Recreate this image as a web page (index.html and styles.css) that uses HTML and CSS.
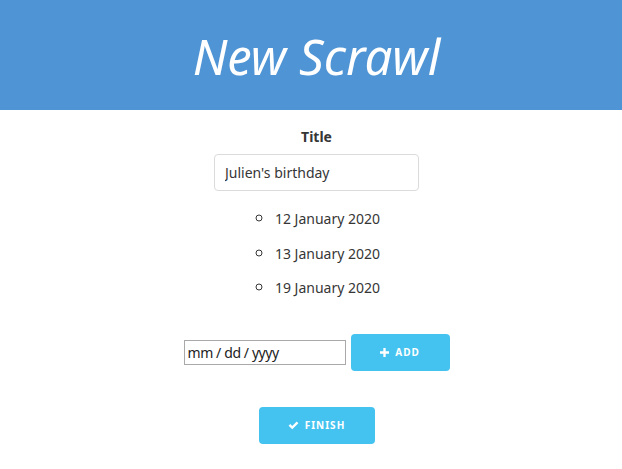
FILE: index.html
```html
<!DOCTYPE html>
<html>
<head>
<meta charset="utf-8">
<link rel="stylesheet" href="styles.css">
</head>
<body>
<header class="hero">
  <h1 class="hero-title">New Scrawl</h1>
</header>
<main class="content">
  <label class="field-label" for="title">Title</label>
  <input id="title" class="text-input" type="text" value="Julien's birthday">
  <ul class="dates">
    <li>12 January 2020</li>
    <li>13 January 2020</li>
    <li>19 January 2020</li>
  </ul>
  <div class="add-row">
    <input class="date-input" type="text" placeholder="mm / dd / yyyy" aria-label="Date">
    <button class="btn btn-add">
      <svg class="icon" viewBox="0 0 10 10" width="9" height="9"><path d="M3.7 0h2.6v3.7H10v2.6H6.3V10H3.7V6.3H0V3.7h3.7z" fill="#fff"/></svg>
      ADD
    </button>
  </div>
  <button class="btn btn-finish">
    <svg class="icon" viewBox="0 0 12 10" width="11" height="9"><path d="M0.6 5.2l1.8-1.8 2.2 2.2L9.6 0.6l1.8 1.8-6.8 6.8z" fill="#fff"/></svg>
    FINISH
  </button>
</main>
</body>
</html>
```
FILE: styles.css
```css
html, body {
  margin: 0;
  padding: 0;
  background: #fff;
}
body {
  font-family: "Noto Sans", "Open Sans", sans-serif;
  color: #363636;
}
.hero {
  background: #4f94d4;
  height: 110px;
  display: flex;
  align-items: center;
  justify-content: center;
  padding-left: 11px;
  box-sizing: border-box;
}
.hero-title {
  margin: 0;
  color: #fff;
  font-weight: 400;
  font-style: italic;
  font-size: 49px;
  line-height: 1;
  position: relative;
  top: 1px;
}
.content {
  display: flex;
  flex-direction: column;
  align-items: center;
  padding-left: 11px;
  padding-top: 18px;
}
.field-label {
  font-weight: 700;
  font-size: 14px;
  line-height: 18px;
  color: #363636;
}
.text-input {
  margin-top: 8px;
  width: 205px;
  height: 37px;
  box-sizing: border-box;
  border: 1px solid #dbdbdb;
  border-radius: 4px;
  padding: 0 10px;
  font-family: inherit;
  font-size: 14px;
  color: #363636;
  outline: none;
}
.dates {
  margin: 17px 0 0;
  padding: 0 0 0 22px;
  list-style: circle;
  font-size: 14px;
}
.dates li {
  height: 20px;
  line-height: 20px;
  margin-bottom: 14.5px;
}
.dates li::marker {
  font-size: 17px;
}
.add-row {
  display: flex;
  align-items: center;
  gap: 5px;
  margin-top: 22px;
}
.date-input {
  width: 162px;
  height: 25px;
  box-sizing: border-box;
  border: 1px solid #a9a9a9;
  border-radius: 0;
  padding: 0 3px;
  font-family: inherit;
  font-size: 14px;
  letter-spacing: -0.4px;
  color: #222;
  outline: none;
}
.date-input::placeholder {
  color: #222;
  opacity: 1;
}
.btn {
  display: inline-flex;
  align-items: center;
  justify-content: center;
  gap: 6px;
  background: #44c3f0;
  color: #fff;
  border: none;
  border-radius: 4px;
  font-family: inherit;
  font-weight: 700;
  font-size: 10px;
  letter-spacing: 1px;
  height: 37px;
  padding: 0;
  cursor: pointer;
}
.btn-add {
  width: 99px;
}
.btn-finish {
  width: 116px;
  margin-top: 36px;
}
.icon {
  display: block;
}
```
